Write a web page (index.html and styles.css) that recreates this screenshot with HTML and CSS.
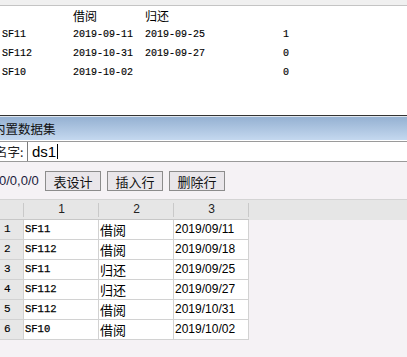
FILE: index.html
```html
<!DOCTYPE html>
<html lang="zh-CN">
<head>
    <meta charset="UTF-8">
    <title>内置数据集</title>
    <link rel="stylesheet" href="styles.css">
</head>
<body>
    <!-- 预览结果 -->
    <div class="top-strip"></div>
    <div class="result">
        <div class="result-row">
            <span></span><span class="cjk">借阅</span><span class="cjk">归还</span><span></span>
        </div>
        <div class="result-row">
            <span>SF11</span><span>2019-09-11</span><span>2019-09-25</span><span>1</span>
        </div>
        <div class="result-row">
            <span>SF112</span><span>2019-10-31</span><span>2019-09-27</span><span>0</span>
        </div>
        <div class="result-row">
            <span>SF10</span><span>2019-10-02</span><span></span><span>0</span>
        </div>
    </div>

    <!-- 数据集面板 -->
    <div class="panel-title">内置数据集</div>
    <div class="name-row">
        <span class="name-label">名字:</span>
        <div class="name-input">ds1<span class="caret"></span></div>
    </div>
    <div class="toolbar">
        <span class="pos">0/0,0/0</span>
        <button class="tool-button">表设计</button>
        <button class="tool-button">插入行</button>
        <button class="tool-button">删除行</button>
    </div>

    <div class="sheet">
        <div class="sheet-row sheet-head">
            <div class="corner"></div>
            <div class="col-head">1</div>
            <div class="col-head">2</div>
            <div class="col-head">3</div>
            <div class="head-fill"></div>
        </div>
        <div class="sheet-row">
            <div class="row-head">1</div><div class="cell code">SF11</div><div class="cell cjk-cell">借阅</div><div class="cell date">2019/09/11</div>
        </div>
        <div class="sheet-row">
            <div class="row-head">2</div><div class="cell code">SF112</div><div class="cell cjk-cell">借阅</div><div class="cell date">2019/09/18</div>
        </div>
        <div class="sheet-row">
            <div class="row-head">3</div><div class="cell code">SF11</div><div class="cell cjk-cell">归还</div><div class="cell date">2019/09/25</div>
        </div>
        <div class="sheet-row">
            <div class="row-head">4</div><div class="cell code">SF112</div><div class="cell cjk-cell">归还</div><div class="cell date">2019/09/27</div>
        </div>
        <div class="sheet-row">
            <div class="row-head">5</div><div class="cell code">SF112</div><div class="cell cjk-cell">借阅</div><div class="cell date">2019/10/31</div>
        </div>
        <div class="sheet-row">
            <div class="row-head">6</div><div class="cell code">SF10</div><div class="cell cjk-cell">借阅</div><div class="cell date">2019/10/02</div>
        </div>
    </div>
</body>
</html>
```

FILE: styles.css
```css
body {
    margin: 0;
    width: 407px;
    height: 357px;
    overflow: hidden;
    background: #f5f2f5;
    font-family: "Liberation Sans", "Noto Sans CJK SC", sans-serif;
    color: #000;
}

.top-strip {
    height: 5px;
    background: #f0f0f0;
    border-bottom: 1px solid #c4c4c4;
}

.result {
    height: 109px;
    background: #fff;
    border-bottom: 1px solid #333;
}

.result-row {
    display: grid;
    grid-template-columns: 71px 72px 138px 40px;
    height: 19px;
    align-items: center;
    padding-left: 2px;
    font-family: "Liberation Mono", monospace;
    font-size: 10px;
    -webkit-text-stroke: 0.15px #000;
}

.result-row .cjk {
    font-family: "Noto Sans CJK SC", sans-serif;
    font-size: 12px;
    -webkit-text-stroke: 0;
}

.panel-title {
    height: 23px;
    line-height: 23px;
    border-top: 1px solid #dfe6ee;
    border-bottom: 1px solid #fff;
    background: linear-gradient(#95b1d2, #c4d8ef);
    font-family: "Noto Sans CJK SC", sans-serif;
    font-size: 12.5px;
    color: #111;
    margin-left: -7px;
}

.name-row {
    display: flex;
    align-items: stretch;
    height: 19px;
    background: #fff;
    border-top: 1px solid #9a9a9a;
    border-bottom: 1px solid #9a9a9a;
}

.name-label {
    width: 32px;
    margin-left: -5px;
    flex-shrink: 0;
    white-space: nowrap;
    line-height: 19px;
    font-family: "Noto Sans CJK SC", sans-serif;
    font-size: 12.5px;
    color: #222;
}

.name-input {
    flex: 1;
    border-left: 1px solid #7a7a7a;
    padding-left: 4px;
    font-size: 15px;
    line-height: 19px;
    display: flex;
    align-items: center;
}

.caret {
    display: inline-block;
    width: 1px;
    height: 15px;
    margin-left: 1px;
    background: #000;
}

.toolbar {
    display: flex;
    align-items: flex-start;
    gap: 5px;
    height: 37px;
    padding-top: 9px;
    box-sizing: border-box;
}

.pos {
    margin-left: -1px;
    width: 41px;
    flex-shrink: 0;
    white-space: nowrap;
    font-size: 13px;
    line-height: 20px;
    color: #1c1c3c;
}

.tool-button {
    width: 56px;
    height: 20px;
    margin: 0;
    padding: 0;
    border: 1px solid #8c8c8c;
    background: #e9e6ea;
    font-family: "Noto Sans CJK SC", sans-serif;
    font-size: 13px;
    line-height: 17px;
    color: #111;
}

.tool-button + .tool-button {
    margin-left: 1px;
}

.sheet-row {
    display: grid;
    grid-template-columns: 24px 75px 75px 75px 1fr;
    height: 20px;
}

.sheet-head {
    height: 21px;
    border-top: 1px solid #d4d4d4;
    box-sizing: border-box;
    background: #e6e6e6;
    font-size: 12px;
}

.col-head,
.corner {
    line-height: 19px;
    text-align: center;
    color: #222;
    background: linear-gradient(#c9c9c9, #c9c9c9) right 3px / 1px 14px no-repeat;
    border-bottom: 1px solid #c7c7c7;
}

.head-fill {
    border-bottom: 1px solid #e6e6e6;
}

.row-head {
    background: #e7e7e7;
    border-right: 1px solid #d2d2d2;
    border-bottom: 1px solid #d2d2d2;
    padding-left: 4px;
    font-family: "Liberation Mono", monospace;
    font-size: 11px;
    line-height: 19px;
    -webkit-text-stroke: 0.15px #000;
}

.cell {
    background: #fff;
    border-right: 1px solid #d2d2d2;
    border-bottom: 1px solid #d2d2d2;
    padding-left: 1px;
    line-height: 19px;
    white-space: nowrap;
    overflow: hidden;
}

.cell.code {
    font-family: "Liberation Mono", monospace;
    font-size: 10.5px;
    -webkit-text-stroke: 0.25px #000;
}

.cell.cjk-cell {
    font-family: "Noto Sans CJK SC", sans-serif;
    font-size: 13px;
}

.cell.date {
    font-size: 12px;
}
```
